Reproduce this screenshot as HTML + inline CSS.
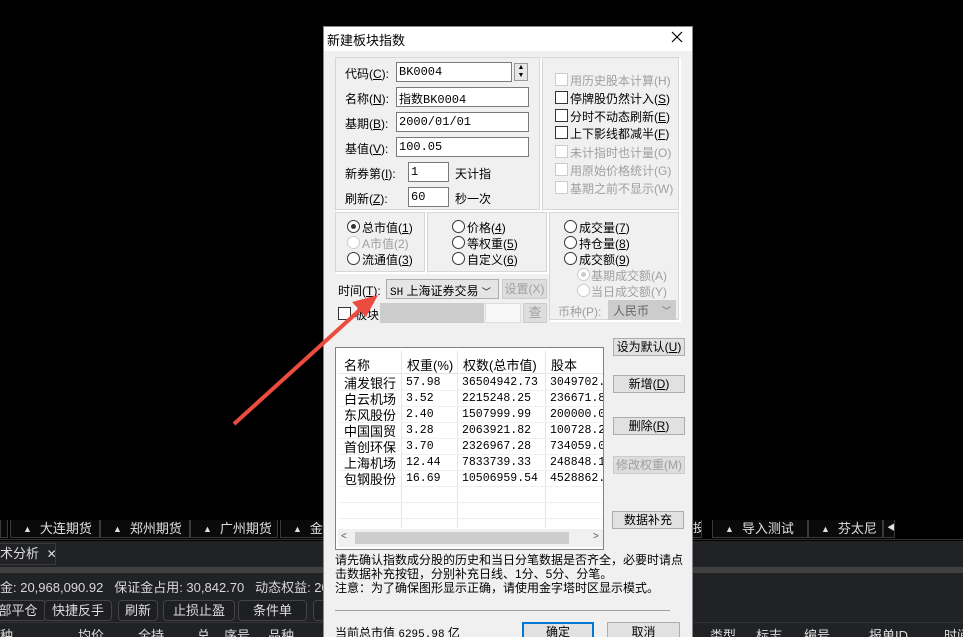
<!DOCTYPE html>
<html><head><meta charset="utf-8"><style>
*{margin:0;padding:0;box-sizing:border-box}
html,body{width:963px;height:637px;overflow:hidden}
body{background:#000;position:relative;font-family:"Liberation Sans","Noto Sans CJK SC",sans-serif;font-size:12px;color:#000}
.a{position:absolute;white-space:nowrap}
.dk{color:#d8d8d8;font-size:13px}
.tab{position:absolute;top:520px;height:18px;border:1px solid #3a3a3a;border-top:none;background:#0a0a0a;color:#e0e0e0;font-size:13px;line-height:17px;padding-left:8px;overflow:hidden}
.tab i{font-style:normal;font-size:9px;margin-right:8px;vertical-align:1px}
.btn2{position:absolute;top:600px;height:21px;border:1px solid #444;border-radius:4px;background:#1e1f22;color:#ddd;font-size:13px;text-align:center;line-height:19px}
.dlg{position:absolute;left:323px;top:26px;width:370px;height:611px;background:#f0f0f0;border:1px solid #888;border-bottom:none}
.grp{position:absolute;border:1px solid #d6d6d6;border-right-color:#fff;border-bottom-color:#fff;box-shadow:inset -1px -1px 0 #d6d6d6,1px 1px 0 #fff}
.in{position:absolute;background:#fff;border:1px solid #7a7a7a;height:20px;font-family:"Liberation Mono","Noto Sans CJK SC",monospace;font-size:12px;padding:2px 0 0 2px}
.cb{position:absolute;width:13px;height:13px;border:1px solid #333;background:#fff}
.cb.d{border-color:#ccc}
.rd{position:absolute;width:13px;height:13px;border:1px solid #333;border-radius:50%;background:#fff}
.rd.d{border-color:#ccc}
.rd.on::after{content:"";position:absolute;left:3px;top:3px;width:5px;height:5px;border-radius:50%;background:#333}
.rd.d.on::after{background:#ccc}
.g{color:#a0a0a0}
.b{position:absolute;left:613px;width:72px;height:18px;background:#e1e1e1;border:1px solid #adadad;text-align:center;line-height:16px;font-size:12px}
.row{position:absolute;left:338px;width:265px;height:16px;border-bottom:1px solid #f0f0f0;font-family:"Liberation Mono","Noto Sans CJK SC",monospace;font-size:11.5px;line-height:16px;overflow:hidden}
.row span{position:absolute;top:0}
.row span.n{font-family:"Noto Sans CJK SC",sans-serif;font-size:13px;line-height:15px}
</style></head><body>
<div class="a" style="left:0;top:518px;width:963px;height:22px;background:#000;border-bottom:1px solid #333"></div>
<div class="tab" style="left:0;width:8px;padding:0"></div>
<div class="tab" style="left:10px;width:90px;padding-left:12px"><i>▲</i>大连期货</div>
<div class="tab" style="left:100px;width:90px;padding-left:12px"><i>▲</i>郑州期货</div>
<div class="tab" style="left:190px;width:88px;padding-left:12px"><i>▲</i>广州期货</div>
<div class="tab" style="left:280px;width:44px;padding-left:12px"><i>▲</i>金融</div>
<div class="tab" style="left:692px;width:10px;padding:0;font-size:12px">投</div>
<div class="tab" style="left:712px;width:96px;padding-left:12px"><i>▲</i>导入测试</div>
<div class="tab" style="left:808px;width:75px;padding-left:12px"><i>▲</i>芬太尼</div>
<div class="tab" style="left:883px;width:12px;padding-left:3px;font-size:10px">◀</div>
<div class="a" style="left:0;top:541px;width:323px;height:96px;background:#212226"></div>
<div class="a" style="left:693px;top:541px;width:270px;height:96px;background:#212226"></div>
<div class="a" style="left:0;top:543px;width:56px;height:22px;background:#212226;border:1px solid #3a3a3a;border-left:none;color:#ddd;font-size:13px;line-height:20px">术分析 <span style="font-size:12px;padding-left:4px">✕</span></div>
<div class="a" style="left:0;top:567px;width:963px;height:6px;background:#404040"></div>
<div class="a" style="left:693px;top:567px;width:270px;height:6px;background:#404040"></div>
<div class="a dk" style="left:0;top:577px">金: 20,968,090.92 &nbsp;&nbsp;保证金占用: 30,842.70 &nbsp;&nbsp;动态权益: 20,9</div>
<div class="btn2" style="left:-10px;width:56px">部平仓</div>
<div class="btn2" style="left:44px;width:68px">快捷反手</div>
<div class="btn2" style="left:118px;width:40px">刷新</div>
<div class="btn2" style="left:163px;width:72px">止损止盈</div>
<div class="btn2" style="left:238px;width:69px">条件单</div>
<div class="btn2" style="left:313px;width:20px"></div>
<div class="a" style="left:0;top:622px;width:323px;height:15px;border-top:1px solid #333;color:#ddd;font-size:13px">
<span class="a" style="left:0;top:2px">种</span><span class="a" style="left:78px;top:2px">均价</span><span class="a" style="left:138px;top:2px">全持</span><span class="a" style="left:197px;top:2px">总</span><span class="a" style="left:224px;top:2px">序号</span><span class="a" style="left:268px;top:2px">品种</span></div>
<div class="a" style="left:693px;top:622px;width:270px;height:15px;border-top:1px solid #333;color:#ddd;font-size:13px">
<span class="a" style="left:17px;top:2px">类型</span><span class="a" style="left:63px;top:2px">标志</span><span class="a" style="left:111px;top:2px">编号</span><span class="a" style="left:176px;top:2px">报单ID</span><span class="a" style="left:251px;top:2px">时间</span></div>

<div class="dlg">
<div class="a" style="left:0;top:0;width:368px;height:24px;background:#fff"></div>
</div>
<div class="a" style="left:327px;top:30px;font-size:13px">新建板块指数</div>
<svg class="a" style="left:671px;top:31px" width="12" height="12"><path d="M1 1L11 11M11 1L1 11" stroke="#000" stroke-width="1.2"/></svg>

<div class="grp" style="left:335px;top:57px;width:206px;height:154px"></div>
<div class="grp" style="left:542px;top:57px;width:138px;height:154px"></div>
<div class="grp" style="left:335px;top:212px;width:91px;height:61px"></div>
<div class="grp" style="left:427px;top:212px;width:121px;height:61px"></div>
<div class="grp" style="left:549px;top:212px;width:131px;height:109px"></div>

<div class="a" style="left:345px;top:65px">代码(<u>C</u>):</div>
<div class="in" style="left:396px;top:62px;width:116px">BK0004</div>
<div class="a" style="left:514px;top:63px;width:14px;height:18px;border:1px solid #999;background:#e8e8e8;font-size:7px;line-height:8px;text-align:center">▲<br>▼</div>
<div class="a" style="left:345px;top:90px">名称(<u>N</u>):</div>
<div class="in" style="left:396px;top:87px;width:133px">指数BK0004</div>
<div class="a" style="left:345px;top:115px">基期(<u>B</u>):</div>
<div class="in" style="left:396px;top:112px;width:133px">2000/01/01</div>
<div class="a" style="left:345px;top:140px">基值(<u>V</u>):</div>
<div class="in" style="left:396px;top:137px;width:133px">100.05</div>
<div class="a" style="left:345px;top:165px">新券第(<u>I</u>):</div>
<div class="in" style="left:408px;top:162px;width:41px">1</div>
<div class="a" style="left:455px;top:165px">天计指</div>
<div class="a" style="left:345px;top:190px">刷新(<u>Z</u>):</div>
<div class="in" style="left:408px;top:187px;width:41px">60</div>
<div class="a" style="left:455px;top:190px">秒一次</div>

<div class="cb d" style="left:555px;top:73px"></div><div class="a g" style="left:570px;top:72px">用历史股本计算(H)</div>
<div class="cb" style="left:555px;top:91px"></div><div class="a" style="left:570px;top:90px">停牌股仍然计入(<u>S</u>)</div>
<div class="cb" style="left:555px;top:109px"></div><div class="a" style="left:570px;top:108px">分时不动态刷新(<u>E</u>)</div>
<div class="cb" style="left:555px;top:126px"></div><div class="a" style="left:570px;top:125px">上下影线都减半(<u>F</u>)</div>
<div class="cb d" style="left:555px;top:145px"></div><div class="a g" style="left:570px;top:144px">未计指时也计量(O)</div>
<div class="cb d" style="left:555px;top:163px"></div><div class="a g" style="left:570px;top:162px">用原始价格统计(G)</div>
<div class="cb d" style="left:555px;top:181px"></div><div class="a g" style="left:570px;top:180px">基期之前不显示(W)</div>

<div class="rd on" style="left:347px;top:220px"></div><div class="a" style="left:362px;top:219px">总市值(<u>1</u>)</div>
<div class="rd d" style="left:347px;top:236px"></div><div class="a g" style="left:362px;top:235px">A市值(2)</div>
<div class="rd" style="left:347px;top:252px"></div><div class="a" style="left:362px;top:251px">流通值(<u>3</u>)</div>
<div class="rd" style="left:452px;top:220px"></div><div class="a" style="left:467px;top:219px">价格(<u>4</u>)</div>
<div class="rd" style="left:452px;top:236px"></div><div class="a" style="left:467px;top:235px">等权重(<u>5</u>)</div>
<div class="rd" style="left:452px;top:252px"></div><div class="a" style="left:467px;top:251px">自定义(<u>6</u>)</div>
<div class="rd" style="left:564px;top:220px"></div><div class="a" style="left:579px;top:219px">成交量(<u>7</u>)</div>
<div class="rd" style="left:564px;top:236px"></div><div class="a" style="left:579px;top:235px">持仓量(<u>8</u>)</div>
<div class="rd" style="left:564px;top:252px"></div><div class="a" style="left:579px;top:251px">成交额(<u>9</u>)</div>
<div class="rd d on" style="left:577px;top:268px"></div><div class="a g" style="left:591px;top:267px">基期成交额(A)</div>
<div class="rd d" style="left:577px;top:284px"></div><div class="a g" style="left:591px;top:283px">当日成交额(Y)</div>
<div class="a g" style="left:558px;top:303px">币种(P):</div>
<div class="a" style="left:608px;top:300px;width:68px;height:20px;background:#ccc;border:1px solid #ccc;color:#666;padding:1px 0 0 4px">人民币 <span style="position:absolute;right:4px;font-size:9px;top:3px">﹀</span></div>

<div class="a" style="left:338px;top:282px">时间(<u>T</u>):</div>
<div class="a" style="left:386px;top:279px;width:113px;height:20px;background:#e5e5e5;border:1px solid #adadad;padding:2px 0 0 3px"><span style="font-family:'Liberation Mono',monospace;font-size:11px">SH</span> 上海证券交易 <span style="font-size:9px">﹀</span></div>
<div class="a g" style="left:502px;top:279px;width:45px;height:20px;background:#ddd;border:1px solid #ccc;text-align:center;line-height:18px">设置(X)</div>
<div class="cb" style="left:338px;top:307px"></div><div class="a" style="left:355px;top:306px">板块</div>
<div class="a" style="left:380px;top:303px;width:104px;height:20px;background:#ccc"></div>
<div class="a" style="left:485px;top:303px;width:36px;height:20px;background:#f8f8f8;border:1px solid #ddd"></div>
<div class="a g" style="left:523px;top:303px;width:24px;height:20px;background:#ddd;border:1px solid #ccc;text-align:center;line-height:18px;font-size:13px">查</div>

<div class="a" style="left:335px;top:347px;width:269px;height:203px;background:#fff;border:1px solid #828282"></div>
<div class="a" style="left:338px;top:351px;width:265px;height:23px;border-bottom:1px solid #e5e5e5"></div>
<div class="a" style="left:344px;top:355px;font-size:13px">名称</div><div class="a" style="left:407px;top:355px;font-size:13px">权重(%)</div><div class="a" style="left:463px;top:355px;font-size:13px">权数(总市值)</div><div class="a" style="left:551px;top:355px;font-size:13px">股本</div>
<div class="a" style="left:401px;top:351px;width:1px;height:177px;background:#e5e5e5"></div>
<div class="a" style="left:457px;top:351px;width:1px;height:177px;background:#e5e5e5"></div>
<div class="a" style="left:545px;top:351px;width:1px;height:177px;background:#e5e5e5"></div>
<div class="row" style="top:375px"><span class="n" style="left:6px">浦发银行</span><span style="left:68px">57.98</span><span style="left:124px">36504942.73</span><span style="left:212px">3049702.7</span></div>
<div class="row" style="top:391px"><span class="n" style="left:6px">白云机场</span><span style="left:68px">3.52</span><span style="left:124px">2215248.25</span><span style="left:212px">236671.83</span></div>
<div class="row" style="top:407px"><span class="n" style="left:6px">东风股份</span><span style="left:68px">2.40</span><span style="left:124px">1507999.99</span><span style="left:212px">200000.00</span></div>
<div class="row" style="top:423px"><span class="n" style="left:6px">中国国贸</span><span style="left:68px">3.28</span><span style="left:124px">2063921.82</span><span style="left:212px">100728.25</span></div>
<div class="row" style="top:439px"><span class="n" style="left:6px">首创环保</span><span style="left:68px">3.70</span><span style="left:124px">2326967.28</span><span style="left:212px">734059.06</span></div>
<div class="row" style="top:455px"><span class="n" style="left:6px">上海机场</span><span style="left:68px">12.44</span><span style="left:124px">7833739.33</span><span style="left:212px">248848.14</span></div>
<div class="row" style="top:471px"><span class="n" style="left:6px">包钢股份</span><span style="left:68px">16.69</span><span style="left:124px">10506959.54</span><span style="left:212px">4528862.0</span></div>
<div class="row" style="top:487px"></div><div class="row" style="top:503px"></div>
<div class="a" style="left:338px;top:529px;width:265px;height:18px;background:#f0f0f0"></div>
<div class="a" style="left:355px;top:532px;width:214px;height:12px;background:#cdcdcd"></div>
<div class="a" style="left:341px;top:531px;font-size:10px;color:#555">&lt;</div>
<div class="a" style="left:593px;top:531px;font-size:10px;color:#555">&gt;</div>

<div class="b" style="top:338px">设为默认(<u>U</u>)</div>
<div class="b" style="top:375px">新增(<u>D</u>)</div>
<div class="b" style="top:417px">删除(<u>R</u>)</div>
<div class="b g" style="top:456px;background:#ddd;border-color:#ccc">修改权重(M)</div>
<div class="b" style="top:511px;left:612px">数据补充</div>

<div class="a" style="left:335px;top:553px;line-height:14px;font-size:12px">请先确认指数成分股的历史和当日分笔数据是否齐全，必要时请点<br>击数据补充按钮，分别补充日线、1分、5分、分笔。<br>注意：为了确保图形显示正确，请使用金字塔时区显示模式。</div>
<div class="a" style="left:335px;top:610px;width:335px;height:1px;background:#a0a0a0"></div>
<div class="a" style="left:335px;top:624px">当前总市值 <span style="font-family:'Liberation Mono',monospace;font-size:11px">6295.98</span> 亿</div>
<div class="a" style="left:522px;top:622px;width:72px;height:20px;background:#e1e1e1;border:2px solid #0078d7;text-align:center;line-height:16px">确定</div>
<div class="a" style="left:607px;top:622px;width:73px;height:20px;background:#e1e1e1;border:1px solid #adadad;text-align:center;line-height:18px">取消</div>

<svg class="a" style="left:0;top:0" width="963" height="637"><line x1="234" y1="424" x2="362" y2="308" stroke="#ec4c3f" stroke-width="4"/><polygon points="378,295 352,302 366,317" fill="#ec4c3f"/></svg>
</body></html>
